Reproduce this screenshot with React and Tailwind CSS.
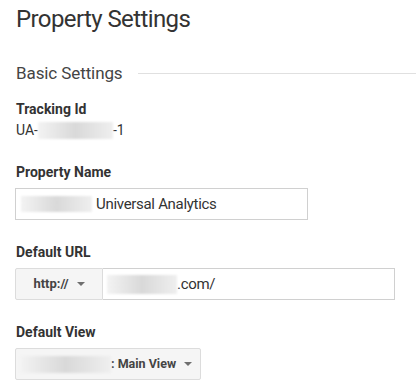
const Blur = ({ className }) => (
  <span
    className={
      "inline-block bg-linear-to-r from-[#f3f3f3] via-[#d9d9d9] to-[#efefef] blur-[1px] " +
      className
    }
  />
);

const Caret = () => (
  <svg width="8" height="4" viewBox="0 0 8 4" className="shrink-0">
    <path d="M0 0h8L4 4z" fill="#6f6f6f" />
  </svg>
);

const Label = ({ children }) => (
  <div className="text-[14px] leading-5 font-bold text-[#333]">{children}</div>
);

export default function App() {
  return (
    <div className="min-h-screen bg-white px-[16px] pt-[3px] font-['Roboto',sans-serif] text-[#333]">
      <h1 className="text-[24px] leading-8 font-normal tracking-[-0.6px] text-[#333]">Property Settings</h1>

      <div className="mt-[26px] flex items-center gap-[15px] -mr-[16px]">
        <span className="text-[17px] leading-6 tracking-[-0.1px] text-[#444]">Basic Settings</span>
        <span className="h-px flex-1 bg-[#e0e0e0]" />
      </div>

      <div className="mt-[14px]">
        <Label>Tracking Id</Label>
        <div className="flex items-center text-[14px] leading-5 mt-[1px]">
          <span>UA-</span>
          <Blur className="h-[17px] w-[75px]" />
          <span>-1</span>
        </div>
      </div>

      <div className="mt-[22px]">
        <Label>Property Name</Label>
        <div className="mt-[6px] -ml-px flex h-[32px] w-[293px] items-center border border-[#d0d0d0] pl-[5px] text-[15px] tracking-[-0.3px]">
          <Blur className="h-[16px] w-[71px]" />
          <span className="ml-[4px]">Universal Analytics</span>
        </div>
      </div>

      <div className="mt-[22px]">
        <Label>Default URL</Label>
        <div className="mt-[6px] -ml-px flex h-[32px] w-[380px]">
          <div className="flex w-[88px] items-center justify-center gap-[8px] rounded-l-[2px] border border-[#dcdcdc] bg-[#f5f5f5] text-[13px] font-bold text-[#444]">
            <span>http://</span>
            <Caret />
          </div>
          <div className="flex flex-1 items-center border border-l-0 border-[#d0d0d0] pl-[4px] text-[15px] tracking-[-0.3px]">
            <Blur className="h-[19px] w-[70px]" />
            <span>.com/</span>
          </div>
        </div>
      </div>

      <div className="mt-[22px]">
        <Label>Default View</Label>
        <div className="mt-[6px] -ml-px flex h-[32px] w-[186px] items-center rounded-[2px] border border-[#dcdcdc] bg-[#f5f5f5] pl-[4px] text-[12.5px] font-bold text-[#444]">
          <Blur className="h-[17px] w-[91px]" />
          <span>: Main View</span>
          <span className="ml-[8px]">
            <Caret />
          </span>
        </div>
      </div>
    </div>
  );
}
